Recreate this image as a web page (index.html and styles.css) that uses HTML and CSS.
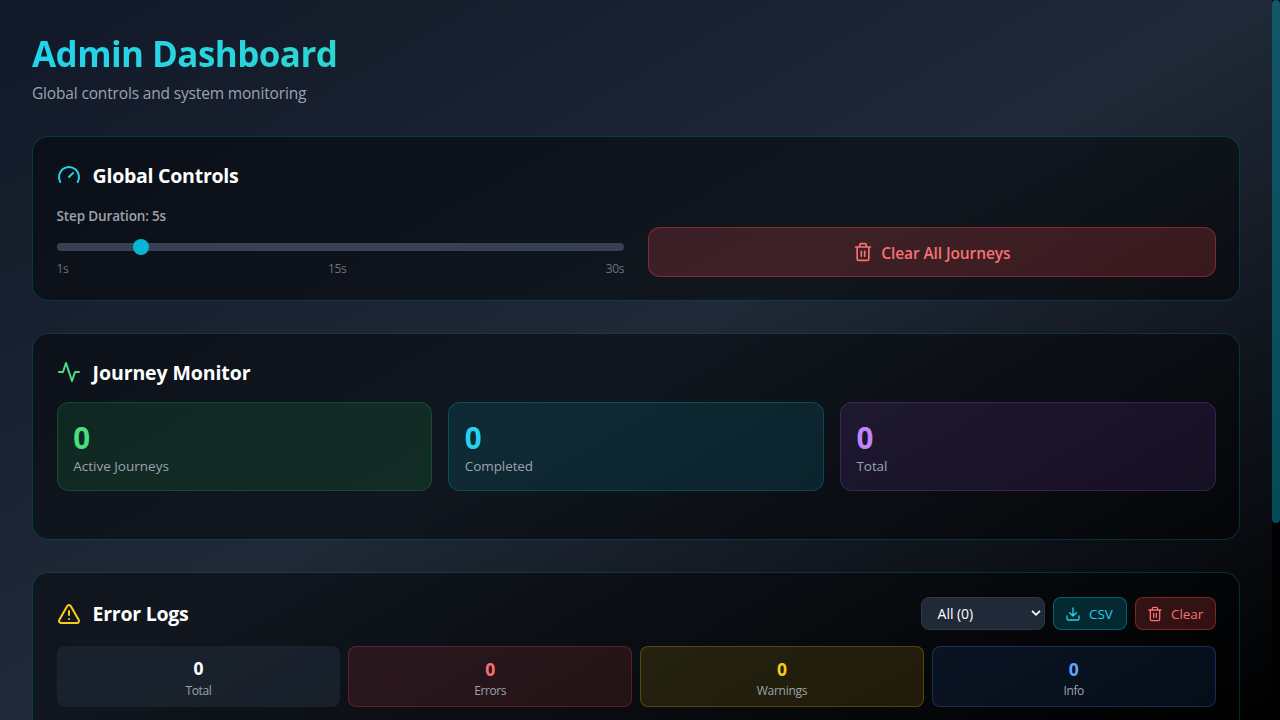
FILE: index.html
```html
<!DOCTYPE html>
<html lang="en">
<head>
<meta charset="utf-8">
<title>Admin Dashboard</title>
<link rel="stylesheet" href="styles.css">
</head>
<body>
<main class="page">
  <header class="page-header">
    <h1><span class="gradient-text">Admin Dashboard</span></h1>
    <p><span>Global controls and system monitoring</span></p>
  </header>

  <section class="card controls">
    <div class="card-title">
      <svg class="icon icon-lg cyan" viewBox="0 0 24 24"><path d="m12 14 4-4"/><path d="M3.34 19a10 10 0 1 1 17.32 0"/></svg>
      <h2>Global Controls</h2>
    </div>
    <div class="controls-grid">
      <div class="duration">
        <label class="duration-label">Step Duration: 5s</label>
        <div class="track"><div class="thumb"></div></div>
        <div class="scale"><span>1s</span><span>15s</span><span>30s</span></div>
      </div>
      <button class="clear-all">
        <svg class="icon icon-md" viewBox="0 0 24 24"><path d="M3 6h18M19 6v14c0 1-1 2-2 2H7c-1 0-2-1-2-2V6M8 6V4c0-1 1-2 2-2h4c1 0 2 1 2 2v2M10 11v6M14 11v6"/></svg>
        <span>Clear All Journeys</span>
      </button>
    </div>
  </section>

  <section class="card monitor">
    <div class="card-title">
      <svg class="icon icon-lg green" viewBox="0 0 24 24"><path d="M22 12h-4l-3 9L9 3l-3 9H2"/></svg>
      <h2 class="t-monitor">Journey Monitor</h2>
    </div>
    <div class="stats">
      <div class="stat stat-green"><div class="num">0</div><div class="lbl">Active Journeys</div></div>
      <div class="stat stat-cyan"><div class="num">0</div><div class="lbl">Completed</div></div>
      <div class="stat stat-purple"><div class="num">0</div><div class="lbl">Total</div></div>
    </div>
  </section>

  <section class="card logs">
    <div class="logs-head">
      <div class="card-title">
        <svg class="icon icon-lg yellow" viewBox="0 0 24 24"><path d="m21.73 18-8-14a2 2 0 0 0-3.48 0l-8 14A2 2 0 0 0 4 21h16a2 2 0 0 0 1.73-3ZM12 9v4M12 17h.01"/></svg>
        <h2 class="t-logs">Error Logs</h2>
      </div>
      <div class="actions">
        <div class="select">
          <span>All (0)</span>
          <svg class="chevron" viewBox="0 0 10 6"><path d="M1 0.8 5 4.8 9 0.8"/></svg>
        </div>
        <button class="btn btn-cyan">
          <svg class="icon icon-sm" viewBox="0 0 24 24"><path d="M21 15v4a2 2 0 0 1-2 2H5a2 2 0 0 1-2-2v-4M7 10l5 5 5-5M12 15V3"/></svg>
          <span>CSV</span>
        </button>
        <button class="btn btn-red">
          <svg class="icon icon-sm" viewBox="0 0 24 24"><path d="M3 6h18M19 6v14c0 1-1 2-2 2H7c-1 0-2-1-2-2V6M8 6V4c0-1 1-2 2-2h4c1 0 2 1 2 2v2M10 11v6M14 11v6"/></svg>
          <span>Clear</span>
        </button>
      </div>
    </div>
    <div class="counts">
      <div class="count count-total"><div class="num">0</div><div class="lbl">Total</div></div>
      <div class="count count-errors"><div class="num">0</div><div class="lbl">Errors</div></div>
      <div class="count count-warnings"><div class="num">0</div><div class="lbl">Warnings</div></div>
      <div class="count count-info"><div class="num">0</div><div class="lbl">Info</div></div>
    </div>
  </section>
</main>
<div class="scrollbar"><div class="scrollbar-thumb"></div></div>
</body>
</html>
```
FILE: styles.css
```css
* { box-sizing: border-box; margin: 0; }

body {
  display: flex;
  height: 720px;
  overflow: hidden;
  background: #000;
  color: #fff;
  font-family: "Segoe UI", "Open Sans", "Noto Sans", sans-serif;
}

button { font-family: inherit; }

.page {
  flex: 1;
  height: 720px;
  overflow: hidden;
  padding: 32px;
  background: linear-gradient(to bottom right, #111827, #1f2937, #000);
}

.page-header { margin-bottom: 32px; }

h1 {
  height: 40px;
  margin-bottom: 8px;
  font-size: 35px;
  line-height: 44px;
  font-weight: 700;
  letter-spacing: -0.57px;
}

.gradient-text {
  display: block;
  background: linear-gradient(to right, #22d3ee, #4ade80);
  -webkit-background-clip: text;
  background-clip: text;
  color: transparent;
}

.page-header p { color: #9ca3af; font-size: 15.5px; line-height: 27px; height: 24px; letter-spacing: -0.16px; }

.card {
  padding: 24px 23.4px 24px 23.6px;
  border: 1px solid rgba(6, 182, 212, 0.23);
  border-radius: 16px;
  background: rgba(0, 0, 0, 0.43);
  margin-bottom: 32px;
}

.controls { height: 165px; }
.monitor { height: 207px; }
.logs { height: 380px; }

.card-title { display: flex; align-items: center; gap: 12px; height: 28px; }

h2 { font-size: 19.5px; line-height: 30px; font-weight: 700; letter-spacing: -0.25px; padding-top: 2px; }
.t-monitor { letter-spacing: -0.1px; }
.t-logs { padding-top: 0; }

.icon { fill: none; stroke: currentColor; stroke-width: 2; stroke-linecap: round; stroke-linejoin: round; flex: none; }
.icon-lg { width: 24px; height: 24px; }
.icon-md { width: 20px; height: 20px; }
.icon-sm { width: 16px; height: 16px; }
.cyan { color: #22d3ee; }
.green { color: #4ade80; }
.yellow { color: #facc15; }

.controls-grid { display: grid; grid-template-columns: 1fr 1fr; gap: 24px; align-items: end; margin-top: 16px; height: 72px; }
.duration { display: flex; flex-direction: column; height: 72px; }
.duration-label { font-size: 13.5px; line-height: 22px; font-weight: 600; color: #9ca3af; letter-spacing: -0.15px; }

.track { height: 8px; margin-top: 16px; border-radius: 8px; background: #374151; }
.thumb { width: 16px; height: 16px; margin-left: 76px; border-radius: 50%; background: #06b6d4; transform: translateY(-4px); }
.scale { display: flex; justify-content: space-between; margin-top: 9px; font-size: 12px; line-height: 17px; color: #6b7280; letter-spacing: -0.4px; }

.clear-all {
  display: flex;
  align-items: center;
  justify-content: center;
  gap: 8px;
  height: 50px;
  border: 1px solid rgba(239, 68, 68, 0.4);
  border-radius: 12px;
  background: rgba(239, 68, 68, 0.2);
  color: #f87171;
  font-size: 15.5px;
  font-weight: 600;
  letter-spacing: -0.1px;
}
.clear-all span { padding-top: 2px; }

.stats { display: grid; grid-template-columns: repeat(3, 1fr); gap: 16px; margin-top: 16px; }
.stat { height: 89px; padding: 16px 15.6px; border: 1px solid; border-radius: 12px; }
.stat .num { font-size: 29.5px; line-height: 37px; height: 36px; font-weight: 700; }
.stat .lbl { font-size: 13.5px; line-height: 23px; color: #9ca3af; }
.stat-green { background: rgba(34, 197, 94, 0.12); border-color: rgba(34, 197, 94, 0.22); }
.stat-green .num { color: #4ade80; }
.stat-cyan { background: rgba(6, 182, 212, 0.12); border-color: rgba(6, 182, 212, 0.25); }
.stat-cyan .num { color: #22d3ee; }
.stat-purple { background: rgba(168, 85, 247, 0.11); border-color: rgba(168, 85, 247, 0.22); }
.stat-purple .num { color: #c084fc; }
.stat-cyan .lbl, .stat-purple .lbl { letter-spacing: -0.1px; }

.logs-head { display: flex; justify-content: space-between; align-items: center; height: 33px; margin-bottom: 16px; }
.actions { display: flex; gap: 8px; }
.select {
  display: flex;
  align-items: center;
  justify-content: space-between;
  width: 124px;
  height: 33px;
  padding: 0 3px 0 16px;
  border: 1px solid #2d3747;
  border-radius: 8px;
  background: #1f2937;
  font-size: 14px;
  letter-spacing: -0.05px;
}
.chevron { width: 10px; height: 6px; margin-top: -1px; fill: none; stroke: #fff; stroke-width: 1.7; }

.btn { display: flex; align-items: center; gap: 8px; height: 33px; padding: 0 12px; border: 1px solid; border-radius: 8px; font-size: 13.5px; letter-spacing: -0.1px; }
.btn span { padding-top: 1px; }
.btn-cyan { width: 74px; padding-left: 11.5px; background: rgba(6, 182, 212, 0.2); border-color: rgba(6, 182, 212, 0.4); color: #22d3ee; }
.btn-red { width: 81px; padding-left: 11.5px; background: rgba(239, 68, 68, 0.2); border-color: rgba(239, 68, 68, 0.4); color: #f87171; }

.counts { display: grid; grid-template-columns: repeat(4, 1fr); gap: 8px; }
.count { height: 61px; padding: 8px; border: 1px solid; border-radius: 8px; text-align: center; }
.count .num { font-size: 17.5px; line-height: 28px; height: 28px; font-weight: 700; }
.count .lbl { font-size: 12px; line-height: 16px; color: #9ca3af; letter-spacing: -0.4px; }
.count-total { border: 0; background: rgba(31, 41, 55, 0.6); }
.count-total .lbl { line-height: 18px; }
.count-errors { background: rgba(239, 68, 68, 0.12); border-color: rgba(239, 68, 68, 0.27); }
.count-errors .num { color: #f87171; }
.count-warnings { background: rgba(234, 179, 8, 0.12); border-color: rgba(234, 179, 8, 0.27); }
.count-warnings .num { color: #facc15; }
.count-warnings .lbl { letter-spacing: -0.25px; }
.count-info { background: rgba(59, 130, 246, 0.1); border-color: rgba(59, 130, 246, 0.27); }
.count-info .num { color: #60a5fa; }

.scrollbar { width: 8px; height: 720px; background: #000; }
.scrollbar-thumb { height: 523px; border-radius: 4px; background: linear-gradient(#115768, #044b58); }
```
